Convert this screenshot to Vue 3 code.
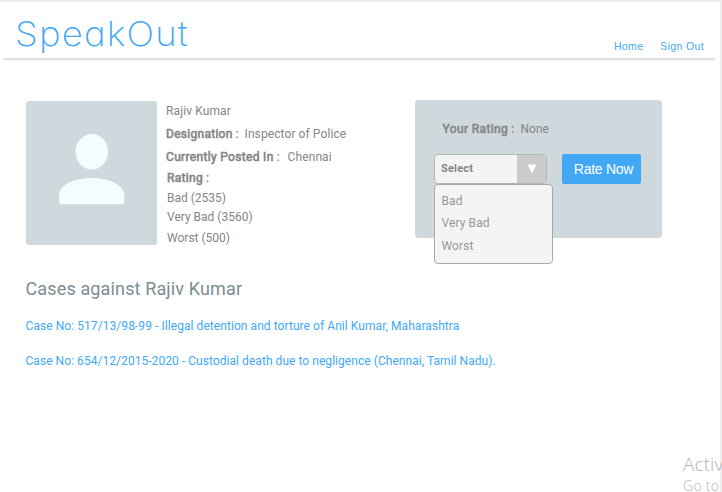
<script setup>
const tallies = [
  { label: 'Bad', count: 2535 },
  { label: 'Very Bad', count: 3560 },
  { label: 'Worst', count: 500 },
]
const options = ['Bad', 'Very Bad', 'Worst']
</script>

<template>
  <div class="page">
    <header class="header">
      <div class="logo">SpeakOut</div>
      <nav class="nav">
        <a class="home">Home</a>
        <a class="signout">Sign Out</a>
      </nav>
    </header>

    <main class="main">
      <div class="avatar">
        <svg width="131" height="144" viewBox="0 0 131 144">
          <ellipse cx="65.8" cy="50.8" rx="16.3" ry="17.7" />
          <path d="M33.2 103.3V94C33.2 83.500 49.500 77 65.800 77S98.300 83.500 98.300 94V103.300Z" />
        </svg>
      </div>

      <div class="details">
        <div class="name">Rajiv Kumar</div>
        <div class="desig"><b>Designation</b><i>:</i><span>Inspector of Police</span></div>
        <div class="posted"><b>Currently Posted In</b><i>:</i><span>Chennai</span></div>
        <div class="rating"><b>Rating</b><i>:</i></div>
        <div v-for="t in tallies" :key="t.label" class="tally">{{ t.label }} ({{ t.count }})</div>
      </div>

      <section class="panel">
        <div class="your"><b>Your Rating</b><i>:</i><span>None</span></div>
        <div class="controls">
          <div class="select">
            <span class="value">Select</span>
            <span class="arrow">
              <svg width="10" height="10" viewBox="0 0 10 10"><path d="M.5.500H9.500L5 9.500Z" /></svg>
            </span>
            <ul class="menu">
              <li v-for="o in options" :key="o">{{ o }}</li>
            </ul>
          </div>
          <button class="rate"><span>Rate Now</span></button>
        </div>
      </section>
    </main>

    <section class="cases">
      <h2>Cases against Rajiv Kumar</h2>
      <a class="c1">Case No: 517/13/98-99 - Illegal detention and torture of Anil Kumar, Maharashtra</a>
      <a class="c2">Case No: 654/12/2015-2020 - Custodial death due to negligence (Chennai, Tamil Nadu).</a>
    </section>

    <aside class="watermark">
      <div class="w1">Activ</div>
      <div class="w2">Go to</div>
    </aside>
  </div>
</template>

<style>
body { background: #fff; overflow: hidden; }
</style>

<style scoped>
.page {
  position: relative;
  box-sizing: border-box;
  width: 722px;
  height: 492px;
  overflow: hidden;
  border-top: 2px solid #ededed;
  box-shadow: inset -2px 0 0 #ededed;
  font-family: Roboto, "Liberation Sans", sans-serif;
  font-size: 12px;
  color: #858585;
  white-space: nowrap;
}
.header {
  box-sizing: border-box;
  height: 58px;
  margin: 0 7px 0 3px;
  padding: 0 11px 0 12px;
  display: flex;
  justify-content: space-between;
  border-bottom: 2px solid #e3e3e3;
  box-shadow: 0 1px 0 #f4f4f4;
}
.logo {
  font: 250 34px/40px Inter, sans-serif;
  font-feature-settings: "cv11" 1;
  letter-spacing: 1.1px;
  transform: scaleX(1.075);
  transform-origin: 0 0;
  color: #42a8f5;
  padding-top: 12px;
}
.nav {
  display: flex;
  gap: 17px;
  padding-top: 38px;
  font: 10.5px/13px "Liberation Sans", sans-serif;
  letter-spacing: .35px;
  color: #42a8f5;
}
.main {
  display: flex;
  align-items: flex-start;
  padding: 39px 0 0 26px;
  height: 144px;
  margin-top: 2px;
}
.avatar {
  width: 131px;
  height: 144px;
  border-radius: 3px;
  background: #cfd8dd;
}
.avatar svg { display: block; fill: #f4fcff; }
.details {
  width: 249px;
  margin: -1px 0 0 9px;
  display: grid;
  grid-template-rows: 22px 24px 22px 20px 20px 18px 24px;
  align-items: center;
}
b { font-weight: 400; -webkit-text-stroke: .6px currentColor; }
i { font-style: normal; margin: 0 5px 0 3px; -webkit-text-stroke: .3px currentColor; }
.name { letter-spacing: .12px; }
.desig b { letter-spacing: .28px; }
.desig i { margin-right: 6px; }
.desig span { letter-spacing: .09px; }
.posted b { letter-spacing: .33px; }
.posted i { margin-right: 8px; }
.posted span { letter-spacing: .1px; }
.rating b { letter-spacing: .3px; }
.rating, .tally { padding-left: 1px; }
.your b { letter-spacing: .38px; }
.your i { margin-right: 6.5px; }
.panel {
  box-sizing: border-box;
  width: 247px;
  height: 138px;
  margin-top: -1px;
  padding: 19px 0 0 19px;
  border-radius: 4px;
  background: #cfd8dd;
}
.your { padding-left: 8.5px; line-height: 20px; }
.controls { display: flex; gap: 15px; margin-top: 15px; }
.select {
  position: relative;
  box-sizing: border-box;
  width: 113px;
  height: 30px;
  display: flex;
  border: 1px solid #b5b5b5;
  border-radius: 4px;
  background: #f4f4f4;
}
.value {
  flex: 1;
  padding-left: 6px;
  font: 700 11px/27px Roboto, sans-serif;
  letter-spacing: .2px;
}
.arrow {
  width: 29px;
  display: flex;
  align-items: center;
  justify-content: center;
  background: #cbcbcb;
  border-radius: 0 3px 3px 0;
}
.arrow svg { fill: #fff; }
.menu {
  position: absolute;
  box-sizing: border-box;
  left: -1px;
  top: 29px;
  width: 119px;
  height: 80px;
  margin: 0;
  padding: 5px 0 0 6.5px;
  list-style: none;
  border: 1px solid #a9a9a9;
  border-radius: 4px;
  background: #f4f4f4;
  color: #979797;
  font-size: 12px;
  letter-spacing: .1px;
  line-height: 22.4px;
}
.rate {
  width: 79px;
  height: 30px;
  padding: 0 0 0 4px;
  border: 0;
  border-radius: 2px;
  background: #42a8f5;
  color: #fff;
  font: 14px/30px "Liberation Sans", sans-serif;
  letter-spacing: -.25px;
}
.cases {
  display: flex;
  flex-direction: column;
  align-items: flex-start;
  padding: 32px 0 0 25.5px;
  color: #42a8f5;
}
h2 {
  margin: 0;
  font-size: 18px;
  line-height: 24px;
  font-weight: 400;
  letter-spacing: .14px;
  color: #7c8d93;
}
.cases a { line-height: 20px; }
.c1 { margin-top: 15px; letter-spacing: .065px; }
.c2 { margin-top: 15px; letter-spacing: .05px; }
.watermark {
  position: absolute;
  left: 683px;
  top: 450px;
  width: 39px;
  font-family: "Open Sans", sans-serif;
  color: #b4b4b4;
}
.w1 { font-size: 19px; line-height: 24px; font-weight: 300; letter-spacing: .1px; }
.w2 { font-size: 14px; line-height: 20px; font-weight: 300; letter-spacing: .3px; }
</style>
